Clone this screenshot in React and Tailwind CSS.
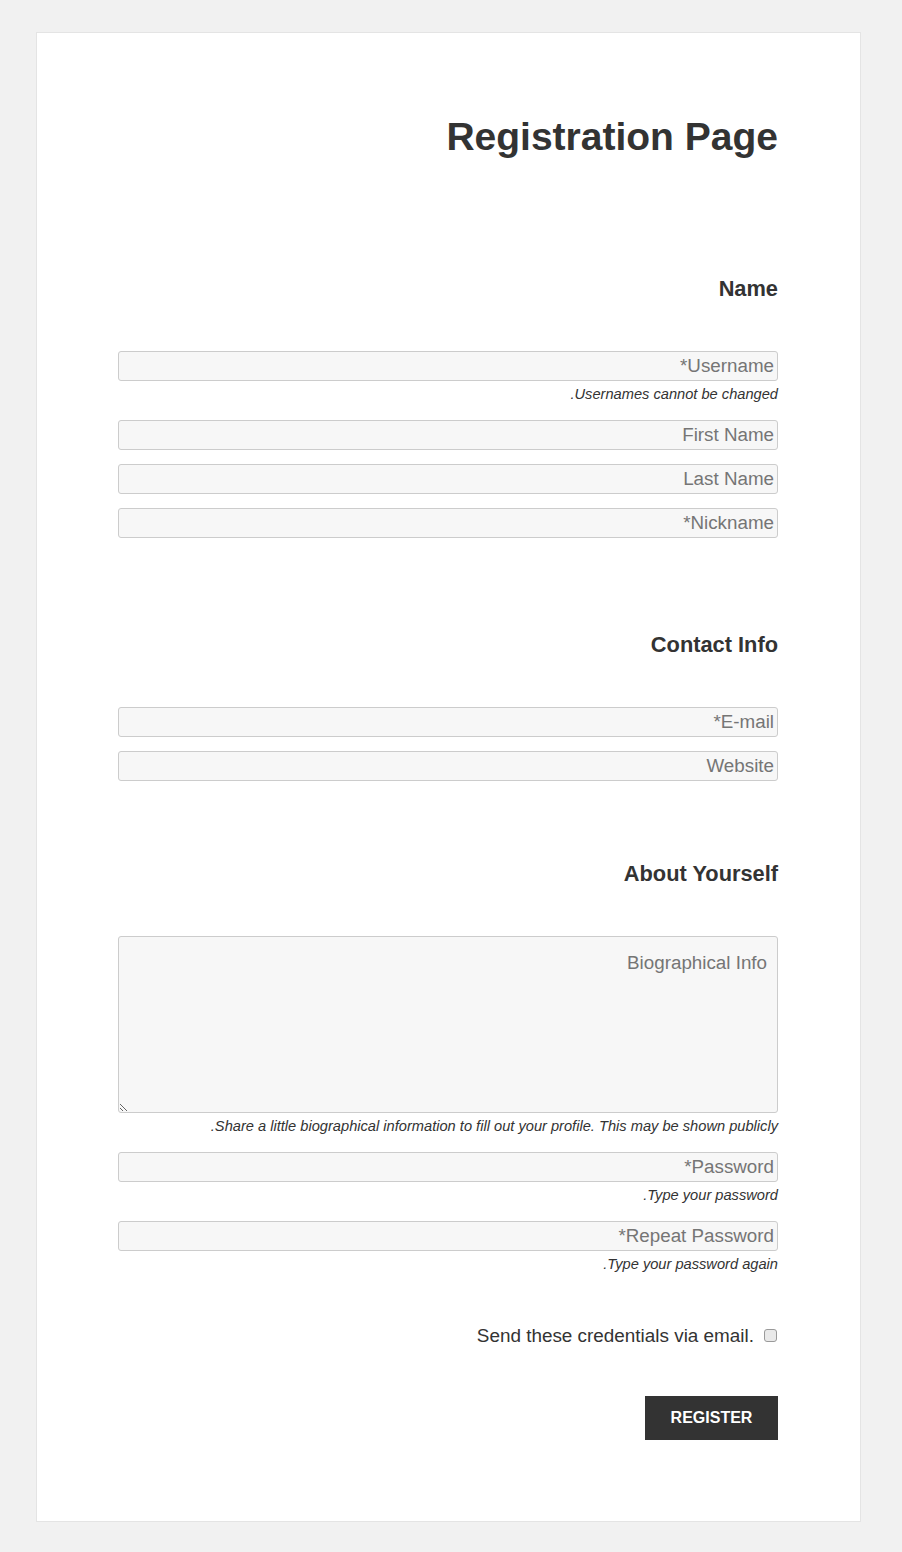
import React from "react";

const font = { fontFamily: '"Liberation Sans", Arial, sans-serif' };

function Field({ placeholder, mt = "mt-[14px]" }) {
  return (
    <input
      type="text"
      placeholder={placeholder}
      className={`${mt} block w-full h-[30px] box-border border border-[#cccccc] rounded-[3px] bg-[#f7f7f7] pr-[3px] pl-[3px] text-right text-[18.8px] text-[#333] placeholder:text-[#757575] outline-none`}
    />
  );
}

function Help({ children }) {
  return (
    <p className="mt-[6px] text-right italic text-[14.65px] leading-[15px] text-[#333]">
      {children}
    </p>
  );
}

function Heading({ children, mt }) {
  return (
    <h2 className={`${mt} text-right font-bold text-[21.8px] leading-[21px] text-[#333]`}>
      {children}
    </h2>
  );
}

export default function App() {
  return (
    <div className="min-h-[1552px] bg-[#f1f1f1] pt-[32px] pb-[30px]" style={font}>
      <div className="ml-[36px] w-[825px] box-border border border-[#e4e4e4] bg-white pl-[81px] pr-[82px] pt-[84px] pb-[81px]">
        <h1 className="text-right font-bold text-[39px] leading-[39px] text-[#333]">
          Registration Page
        </h1>

        <Heading mt="mt-[122px]">Name</Heading>
        <Field placeholder="*Username" mt="mt-[52px]" />
        <Help>.Usernames cannot be changed</Help>
        <Field placeholder="First Name" mt="mt-[18px]" />
        <Field placeholder="Last Name" />
        <Field placeholder="*Nickname" />

        <Heading mt="mt-[96px]">Contact Info</Heading>
        <Field placeholder="*E-mail" mt="mt-[52px]" />
        <Field placeholder="Website" />

        <Heading mt="mt-[82px]">About Yourself</Heading>
        <textarea
          dir="rtl"
          placeholder="Biographical Info"
          className="mt-[52px] block w-full h-[177px] box-border border border-[#cccccc] rounded-[3px] bg-[#f7f7f7] pt-[12px] pr-[10px] pl-[10px] text-[18.8px] leading-normal text-[#333] placeholder:text-[#757575] outline-none resize"
        />
        <Help>
          .Share a little biographical information to fill out your profile. This may be shown publicly
        </Help>
        <Field placeholder="*Password" mt="mt-[18px]" />
        <Help>.Type your password</Help>
        <Field placeholder="*Repeat Password" mt="mt-[18px]" />
        <Help>.Type your password again</Help>

        <div className="mt-[54px] flex justify-end items-center gap-[10px] text-[18.9px] leading-[19px] text-[#333]">
          <label htmlFor="send">Send these credentials via email.</label>
          <input
            id="send"
            type="checkbox"
            className="appearance-none w-[13px] h-[13px] mr-[1px] border border-[#9a9a9a] rounded-[3px] bg-[#e9e9e9]"
          />
        </div>

        <div className="mt-[51px] flex justify-end">
          <button
            type="button"
            className="w-[133px] h-[44px] bg-[#333333] text-white font-bold text-[16px] uppercase"
          >
            Register
          </button>
        </div>
      </div>
    </div>
  );
}
